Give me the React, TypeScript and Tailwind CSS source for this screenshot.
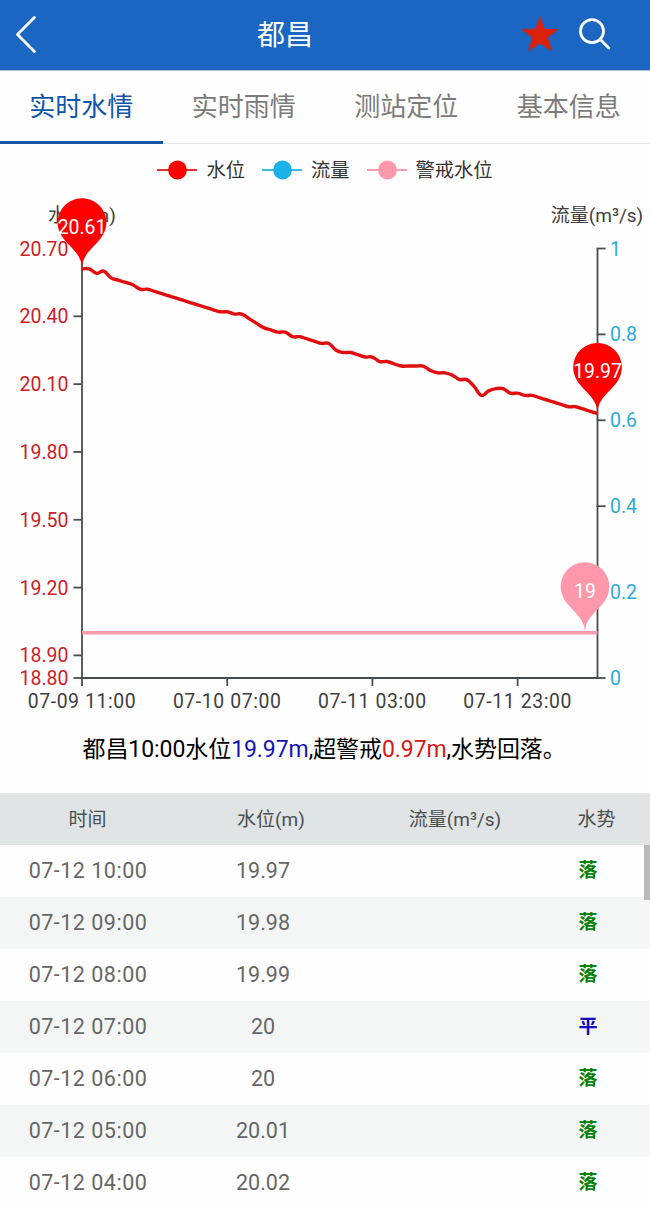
import type { FC } from "react";

interface Reading {
  time: string;
  level: string;
  flow?: string;
  trend: "落" | "平" | "涨";
}

const TABS = ["实时水情", "实时雨情", "测站定位", "基本信息"];

const LEGEND = [
  { label: "水位", color: "#ff0000", line: "#e03030" },
  { label: "流量", color: "#1bb2ea", line: "#3bb9e3" },
  { label: "警戒水位", color: "#ff98ab", line: "#ff98ab" },
];

// hourly levels, 07-09 11:00 to 07-12 10:00
const LEVELS = [
  20.61, 20.61, 20.59, 20.6, 20.57, 20.56, 20.55, 20.54, 20.52, 20.52, 20.51, 20.5,
  20.49, 20.48, 20.47, 20.46, 20.45, 20.44, 20.43, 20.42, 20.42, 20.41, 20.41, 20.39,
  20.37, 20.35, 20.34, 20.33, 20.33, 20.31, 20.31, 20.3, 20.29, 20.28, 20.28, 20.25,
  20.24, 20.24, 20.23, 20.22, 20.22, 20.2, 20.2, 20.19, 20.18, 20.18, 20.18, 20.18,
  20.16, 20.15, 20.15, 20.14, 20.12, 20.12, 20.09, 20.05, 20.07, 20.08, 20.08, 20.06,
  20.06, 20.05, 20.05, 20.04, 20.03, 20.02, 20.01, 20.0, 20.0, 19.99, 19.98, 19.97,
];

const READINGS: Reading[] = [
  { time: "07-12 10:00", level: "19.97", trend: "落" },
  { time: "07-12 09:00", level: "19.98", trend: "落" },
  { time: "07-12 08:00", level: "19.99", trend: "落" },
  { time: "07-12 07:00", level: "20", trend: "平" },
  { time: "07-12 06:00", level: "20", trend: "落" },
  { time: "07-12 05:00", level: "20.01", trend: "落" },
  { time: "07-12 04:00", level: "20.02", trend: "落" },
];

const TREND_COLORS = {
  落: "text-[#0b800b]",
  平: "text-[#0d0dc4]",
  涨: "text-[#e01010]",
};

const LEFT_TICKS = [20.7, 20.4, 20.1, 19.8, 19.5, 19.2, 18.9, 18.8];
const RIGHT_TICKS = [1, 0.8, 0.6, 0.4, 0.2, 0];
const TIME_TICKS = [
  { hour: 0, label: "07-09 11:00" },
  { hour: 20, label: "07-10 07:00" },
  { hour: 40, label: "07-11 03:00" },
  { hour: 60, label: "07-11 23:00" },
];

// plot area inside the svg
const LEFT = 82;
const RIGHT = 597.5;
const TOP = 52.5;
const BOTTOM = 482;

const xOf = (hour: number) => LEFT + ((RIGHT - LEFT) * hour) / (LEVELS.length - 1);
const yOf = (level: number) => BOTTOM - ((level - 18.8) / 1.9) * (BOTTOM - TOP);

const smoothPath = (values: number[]) => {
  const pts = values.map((v, i) => [xOf(i), yOf(v)]);
  const slope = (i: number) => {
    const a = pts[Math.max(i - 1, 0)];
    const b = pts[Math.min(i + 1, pts.length - 1)];
    return (b[1] - a[1]) / (b[0] - a[0]);
  };
  let d = `M${pts[0][0]} ${pts[0][1]}`;
  for (let i = 1; i < pts.length; i++) {
    const [x0, y0] = pts[i - 1];
    const [x1, y1] = pts[i];
    const k = (x1 - x0) * 0.4;
    d += `C${x0 + k} ${y0 + slope(i - 1) * k} ${x1 - k} ${y1 - slope(i) * k} ${x1} ${y1}`;
  }
  return d;
};

const Pin: FC<{ x: number; y: number; color: string; label: string }> = ({ x, y, color, label }) => {
  const h = 81;
  const r = 24.3;
  const dy = (r * r) / (h - r);
  const cy = y - h + r + dy;
  const angle = Math.asin(dy / r);
  const dx = Math.cos(angle) * r;
  const tx = Math.sin(angle) * r * 0.6;
  const ty = Math.cos(angle) * r * 0.6;
  const tip = y - r * 0.7;
  const d = `M${x - dx} ${cy + dy}A${r} ${r} 0 1 1 ${x + dx} ${cy + dy}C${x + dx - tx} ${cy + dy + ty} ${x} ${tip} ${x} ${y}C${x} ${tip} ${x - dx + tx} ${cy + dy + ty} ${x - dx} ${cy + dy}Z`;
  return (
    <g>
      <path d={d} fill={color} />
      <text x={x} y={cy + 11} textAnchor="middle" fill="#fff" className="text-[19.4px]">
        {label}
      </text>
    </g>
  );
};

const LevelChart: FC = () => (
  <svg width="650" height="524" viewBox="0 0 650 524" className="block">
    <g fill="#404040" className="text-[19px]">
      <text x="82" y="25.5" textAnchor="middle">水位(m)</text>
      <text x="597" y="25.5" textAnchor="middle">流量(m³/s)</text>
      {TIME_TICKS.map((t) => (
        <text key={t.label} x={xOf(t.hour)} y="511.5" textAnchor="middle" className="text-[19.4px] tracking-[0.6px]">
          {t.label}
        </text>
      ))}
    </g>
    <g fill="#cd2026" className="text-[19.5px]">
      {LEFT_TICKS.map((v) => (
        <text key={v} x="68.5" y={yOf(v) + 7} textAnchor="end">{v.toFixed(2)}</text>
      ))}
    </g>
    <g fill="#2fabd3" className="text-[19.5px]">
      {RIGHT_TICKS.map((v) => (
        <text key={v} x="610" y={BOTTOM - v * (BOTTOM - TOP) + 7}>{v}</text>
      ))}
    </g>
    <g stroke="#4a4d4f" strokeWidth="1.8" fill="none">
      <path d={`M${LEFT} ${TOP}V490M${RIGHT} ${TOP}V${BOTTOM}M${LEFT} ${BOTTOM}H${RIGHT}`} />
      {LEFT_TICKS.map((v) => (
        <path key={v} d={`M73.5 ${yOf(v)}H${LEFT}`} />
      ))}
      {RIGHT_TICKS.map((v) => (
        <path key={v} d={`M${RIGHT - 0.9} ${BOTTOM - v * (BOTTOM - TOP)}h9`} />
      ))}
      {TIME_TICKS.slice(1).map((t) => (
        <path key={t.hour} d={`M${xOf(t.hour)} ${BOTTOM}v8`} />
      ))}
    </g>
    <path d={smoothPath(LEVELS)} fill="none" stroke="#e20d0d" strokeWidth="3.4" strokeLinejoin="round" />
    <path d={`M${LEFT} ${yOf(19)}H${RIGHT}`} stroke="#f79bb0" strokeWidth="3.4" />
    <Pin x={LEFT} y={yOf(20.61)} color="#ff0000" label="20.61" />
    <Pin x={RIGHT} y={yOf(19.97)} color="#ff0000" label="19.97" />
    <Pin x={585} y={yOf(19)} color="#ff98ab" label="19" />
  </svg>
);

const Header: FC = () => (
  <header className="flex h-[71px] items-center border-b border-[#a9bfd2] bg-[#1a66c2]">
    <div className="flex w-[257px] pl-[14px]">
      <button aria-label="返回">
        <svg width="24" height="40" viewBox="0 0 24 40" fill="none" stroke="#fff" strokeWidth="2.8" strokeLinecap="round" strokeLinejoin="round">
          <path d="M20.4 2.6 3.5 19.5 20.4 36.4" />
        </svg>
      </button>
    </div>
    <h1 className="pt-px text-[28px] leading-none text-white">都昌</h1>
    <div className="flex flex-1 items-center justify-end pr-[38px] pb-[3px]">
      <button aria-label="收藏" className="mr-[19px]">
        <svg width="38" height="38" viewBox="0 0 38 38" fill="#db200b">
          <path d="M19 1 23.6 13.7 37.8 14.3 26.8 22.6 30.9 36.2 19 28.6 7.1 36.2 11.2 22.6 .2 14.3 14.4 13.7Z" />
        </svg>
      </button>
      <button aria-label="搜索">
        <svg width="34" height="34" viewBox="0 0 34 34" fill="none" stroke="#fff" strokeWidth="2.8" strokeLinecap="round">
          <circle cx="14" cy="14.2" r="11.5" />
          <path d="m22.4 22.6 8.4 8.4" />
        </svg>
      </button>
    </div>
  </header>
);

export default function App() {
  return (
    <div className="h-[1209px] w-[650px] overflow-hidden bg-[#fefefe] font-[Roboto,'Noto_Sans_CJK_SC',sans-serif]">
      <Header />

      <nav className="grid h-[73px] grid-cols-4 border-b border-[#e2e4e5]">
        {TABS.map((tab, i) => (
          <button
            key={tab}
            className={
              i === 0
                ? "-mb-px border-b-3 border-[#0f55a8] pt-0.5 text-[26px] leading-[68px] text-[#0f55a8]"
                : "text-[26px] leading-[70px] text-[#7b7b7b]"
            }
          >
            {tab}
          </button>
        ))}
      </nav>

      <div className="flex h-[52px] justify-center gap-[17px]">
        {LEGEND.map((item) => (
          <div key={item.label} className="flex items-center gap-[9px] text-[19.3px] text-[#333]">
            <svg width="40" height="20" viewBox="0 0 40 20">
              <path d="M0 10H40" stroke={item.line} strokeWidth="2" />
              <circle cx="20.5" cy="10" r="9.4" fill={item.color} />
            </svg>
            <span className="pt-0.5">{item.label}</span>
          </div>
        ))}
      </div>

      <LevelChart />

      <p className="h-[73px] pt-3 pl-[82.5px] text-[23px] leading-9 tracking-[-0.07px] whitespace-nowrap text-black">
        都昌10:00水位<span className="text-[#1512b5]">19.97m</span>,超警戒
        <span className="text-[#d81616]">0.97m</span>,水势回落。
      </p>

      <div className="grid h-[52px] grid-cols-[175px_192px_176px_107px] items-center bg-[#e0e4e5] pt-0.5 text-[19px] text-[#4c4f50]">
        <span className="text-center">时间</span>
        <span className="pl-[62px]">水位(m)</span>
        <span className="text-center">流量(m³/s)</span>
        <span className="text-center">水势</span>
      </div>
      <div className="relative">
        {READINGS.map((row) => (
          <div
            key={row.time}
            className="grid h-[52px] grid-cols-[175px_176px_192px_90px] items-center text-[21.5px] text-[#666] even:bg-[#f4f6f6]"
          >
            <span className="pl-px text-center tracking-[0.5px]">{row.time}</span>
            <span className="text-center">{row.level}</span>
            <span className="text-center">{row.flow}</span>
            <span className={`pt-px text-center text-[19px] font-bold ${TREND_COLORS[row.trend]}`}>{row.trend}</span>
          </div>
        ))}
        <div className="absolute top-0 right-0 h-[55px] w-1.5 bg-[#b9b9b9]" />
      </div>
    </div>
  );
}
